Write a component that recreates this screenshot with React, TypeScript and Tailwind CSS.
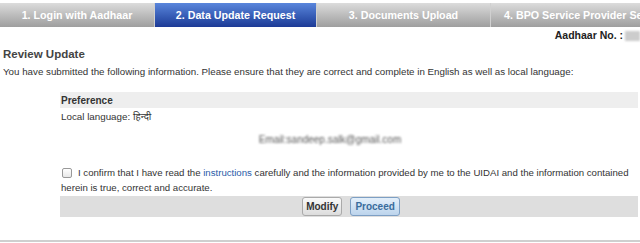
import React from 'react';

const tabs = [
  { label: '1. Login with Aadhaar', active: false, w: 'w-[155px]' },
  { label: '2. Data Update Request', active: true, w: 'w-[162px]' },
  { label: '3. Documents Upload', active: false, w: 'w-[174px]' },
  { label: '4. BPO Service Provider Selection', active: false, w: 'w-[200px]' },
];

const App: React.FC = () => {
  return (
    <div className="w-[640px] h-[243px] bg-white overflow-hidden text-[#333] font-['Liberation_Sans',Arial,sans-serif]">
      {/* step tabs */}
      <div className="flex h-[24px] mt-[3px] overflow-hidden whitespace-nowrap">
        {tabs.map((t) => (
          <div
            key={t.label}
            className={`${t.w} shrink-0 flex items-center justify-center text-[10.7px] font-bold text-white border-r border-[#d0d0d0] ${
              t.active
                ? 'bg-linear-to-b from-[#5a86dc] to-[#1d3a96]'
                : 'bg-linear-to-b from-[#dcdcdc] to-[#9e9e9e]'
            }`}
          >
            {t.label}
          </div>
        ))}
      </div>

      <div className="flex justify-end items-center h-[17px] text-[10.5px] font-bold text-[#222]">
        <span>Aadhaar No. :</span>
        <span className="ml-[2px] w-[15px] h-[10px] bg-[#ccc] blur-[1px]" />
      </div>

      <div className="px-[3px]">
        <h2 className="text-[11.5px] font-bold text-[#444] leading-[14px] mt-[3px]">Review Update</h2>
        <p className="text-[9.75px] leading-[14px] mt-[4px]">
          You have submitted the following information. Please ensure that they are correct and complete in English as well as local language:
        </p>
      </div>

      <div className="ml-[60px] mr-[2px] mt-[13px] text-[9.8px]">
        <div className="bg-[#eeeeee] h-[16px] flex items-center px-[1px] font-bold text-[10px]">Preference</div>
        <div className="h-[18px] flex items-center px-[1px] font-['Liberation_Sans','Noto_Sans',sans-serif]">
          Local language: हिन्दी
        </div>
        <div className="h-[26px] flex items-center justify-center pr-[38px] text-[10px] text-[#555] blur-[1.2px]">Email:sandeep.salk@gmail.com</div>

        <div className="pt-[13px] px-[1px] leading-[15px] text-[9.65px]">
          <span className="inline-block align-middle w-[10px] h-[10px] mr-[6px] ml-[1px] border border-[#999] rounded-[2px] bg-linear-to-b from-white to-[#e8e8e8]" />
          I confirm that I have read the <span className="text-[#2a5ba8]">instructions</span> carefully and the information provided by me to the UIDAI and the information contained herein is true, correct and accurate.
        </div>

        <div className="bg-[#dedede] h-[21px] flex items-center justify-center gap-[8px] mt-[1px] pl-[4px]">
          <button className="h-[19px] px-[3px] text-[10px] font-bold text-[#333] border border-[#aaa] rounded-[3px] bg-linear-to-b from-[#fafafa] to-[#dcdcdc]">
            Modify
          </button>
          <button className="h-[19px] px-[4px] text-[10px] font-bold text-[#3a6c9c] border border-[#7d9fc4] rounded-[3px] bg-linear-to-b from-[#e4effa] to-[#bcd4ec]">
            Proceed
          </button>
        </div>
      </div>

      <div className="mt-[23px] h-[2px] bg-[#cfcfcf]" />
    </div>
  );
};

export default App;
